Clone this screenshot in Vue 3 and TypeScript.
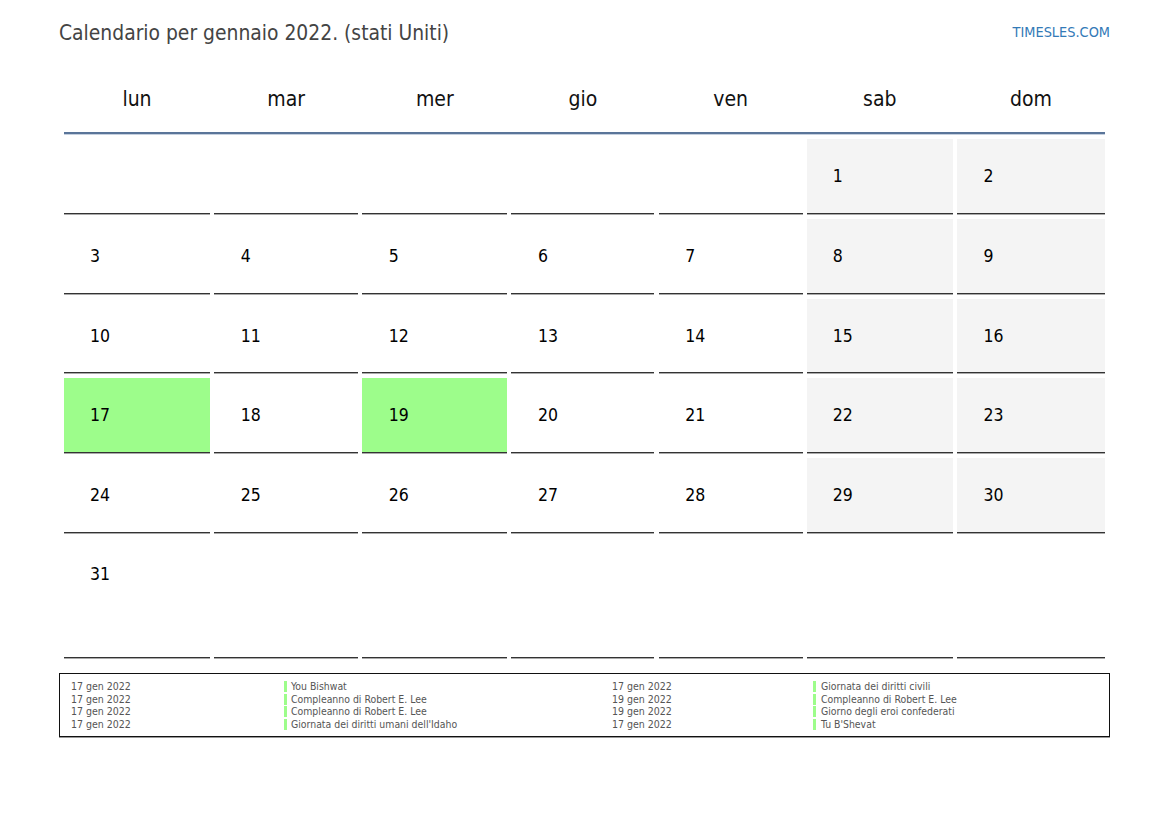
<script setup lang="ts">
interface Day { n: number | null; weekend: boolean; holiday: boolean }
const headers = ['lun', 'mar', 'mer', 'gio', 'ven', 'sab', 'dom']
const days: Day[] = []
for (let i = 0; i < 42; i++) {
  const n = i - 4
  const col = i % 7
  const valid = n >= 1 && n <= 31
  days.push({ n: valid ? n : null, weekend: valid && col >= 5, holiday: n === 17 || n === 19 })
}
const legend = [
  ['17 gen 2022', 'You Bishwat', '17 gen 2022', 'Giornata dei diritti civili'],
  ['17 gen 2022', 'Compleanno di Robert E. Lee', '19 gen 2022', 'Compleanno di Robert E. Lee'],
  ['17 gen 2022', 'Compleanno di Robert E. Lee', '19 gen 2022', 'Giorno degli eroi confederati'],
  ['17 gen 2022', "Giornata dei diritti umani dell'Idaho", '17 gen 2022', "Tu B'Shevat"],
]
</script>

<template>
  <div class="page">
    <header class="top">
      <h1 class="title">Calendario per gennaio 2022. (stati Uniti)</h1>
      <span class="brand">TIMESLES.COM</span>
    </header>
    <div class="heads">
      <div v-for="h in headers" :key="h" class="head">{{ h }}</div>
    </div>
    <div class="grid">
      <div
        v-for="(d, i) in days"
        :key="i"
        class="cell"
        :class="{ weekend: d.weekend, holiday: d.holiday }"
      >
        <span v-if="d.n" class="num">{{ d.n }}</span>
      </div>
    </div>
    <div class="legend">
      <div v-for="(r, i) in legend" :key="i" class="lrow">
        <span class="date">{{ r[0] }}</span>
        <span class="name">{{ r[1] }}</span>
        <span class="date">{{ r[2] }}</span>
        <span class="name second">{{ r[3] }}</span>
      </div>
    </div>
  </div>
</template>

<style>
html, body { margin: 0; background: #fff; }
</style>

<style scoped>
.page {
  width: 1169px;
  height: 827px;
  box-sizing: border-box;
  padding: 19px 59px 0;
  font-family: "DejaVu Sans", sans-serif;
  font-stretch: condensed;
  overflow: hidden;
}
.top {
  display: flex;
  justify-content: space-between;
  align-items: center;
  height: 28px;
}
.title {
  margin: 0;
  font-size: 20.85px;
  font-weight: 400;
  color: #444;
}
.brand {
  font-size: 14.4px;
  color: #337ab7;
  margin-top: -2px;
}
.heads {
  margin: 17px 5px 0;
  display: grid;
  grid-template-columns: 146px 144px 145px 143px 144px 146px 148px;
  column-gap: 4.17px;
  height: 68px;
  border-bottom: 2px solid #5a7599;
  box-shadow: 0 1px 0 #c5d0df;
  width: 1041px;
}
.head {
  text-align: center;
  font-size: 21px;
  line-height: 70px;
  color: #111;
}
.grid {
  margin: 5px 5px 0;
  width: 1041px;
  display: grid;
  grid-template-columns: 146px 144px 145px 143px 144px 146px 148px;
  grid-template-rows: 75px 75px 74px 75px 75px 120px;
  column-gap: 4.17px;
  row-gap: 5px;
}
.cell {
  border-bottom: 1px solid #333;
  box-shadow: 0 1px 0 #aaa;
  box-sizing: border-box;
  padding: 26px 0 0 26.5px;
  font-size: 17.5px;
  line-height: 22px;
  color: #000;
}
.cell:nth-child(7n + 1),
.cell:nth-child(7n + 6) { padding-left: 26px; }
.cell:nth-child(n + 36) { padding-top: 25px; }
.weekend { background: #f4f4f4; }
.holiday { background: #9dfd8b; }
.legend {
  margin-top: 15px;
  height: 64px;
  box-sizing: border-box;
  border: 1px solid #111;
  box-shadow: 0 1px 0 #999;
  padding: 6px 0 0 11px;
  width: 1051px;
}
.lrow {
  display: grid;
  grid-template-columns: 213px 328px 201px 1fr;
  height: 12.5px;
  font-size: 10.5px;
  line-height: 12.5px;
  color: #555;
}
.date { white-space: nowrap; }
.name {
  border-left: 3px solid #9dfd8b;
  padding-left: 4px;
  font-size: 10.4px;
  white-space: nowrap;
  height: 11px;
  line-height: 11px;
  margin-top: 1px;
}
.second { padding-left: 5px; }
</style>
